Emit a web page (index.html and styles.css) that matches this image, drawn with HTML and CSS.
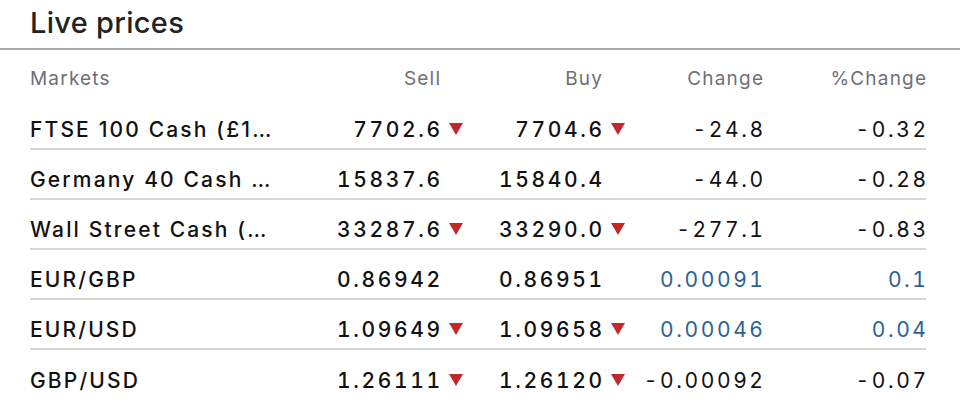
FILE: index.html
```html
<!DOCTYPE html>
<html lang="en">
<head>
<meta charset="utf-8">
<title>Live prices</title>
<link rel="stylesheet" href="styles.css">
</head>
<body>
<section class="panel">
  <h2 class="title">Live prices</h2>
  <div class="table">
    <div class="row head">
      <div class="c-name">Markets</div>
      <div class="c-num">Sell</div>
      <div class="c-arr"></div>
      <div class="c-num">Buy</div>
      <div class="c-arr"></div>
      <div class="c-chg">Change</div>
      <div class="c-pct">%Change</div>
    </div>
    <div class="row">
      <div class="c-name">FTSE 100 Cash (£10)</div>
      <div class="c-num">7702.6</div>
      <div class="c-arr"><span class="down"></span></div>
      <div class="c-num">7704.6</div>
      <div class="c-arr"><span class="down"></span></div>
      <div class="c-chg">-24.8</div>
      <div class="c-pct">-0.32</div>
    </div>
    <div class="row">
      <div class="c-name">Germany 40 Cash (€1)</div>
      <div class="c-num">15837.6</div>
      <div class="c-arr"></div>
      <div class="c-num">15840.4</div>
      <div class="c-arr"></div>
      <div class="c-chg">-44.0</div>
      <div class="c-pct">-0.28</div>
    </div>
    <div class="row">
      <div class="c-name">Wall Street Cash ($1)</div>
      <div class="c-num">33287.6</div>
      <div class="c-arr"><span class="down"></span></div>
      <div class="c-num">33290.0</div>
      <div class="c-arr"><span class="down"></span></div>
      <div class="c-chg">-277.1</div>
      <div class="c-pct">-0.83</div>
    </div>
    <div class="row">
      <div class="c-name">EUR/GBP</div>
      <div class="c-num">0.86942</div>
      <div class="c-arr"></div>
      <div class="c-num">0.86951</div>
      <div class="c-arr"></div>
      <div class="c-chg up">0.00091</div>
      <div class="c-pct up">0.1</div>
    </div>
    <div class="row">
      <div class="c-name">EUR/USD</div>
      <div class="c-num">1.09649</div>
      <div class="c-arr"><span class="down"></span></div>
      <div class="c-num">1.09658</div>
      <div class="c-arr"><span class="down"></span></div>
      <div class="c-chg up">0.00046</div>
      <div class="c-pct up">0.04</div>
    </div>
    <div class="row">
      <div class="c-name">GBP/USD</div>
      <div class="c-num">1.26111</div>
      <div class="c-arr"><span class="down"></span></div>
      <div class="c-num">1.26120</div>
      <div class="c-arr"><span class="down"></span></div>
      <div class="c-chg">-0.00092</div>
      <div class="c-pct">-0.07</div>
    </div>
  </div>
</section>
</body>
</html>
```
FILE: styles.css
```css
html, body {
  margin: 0;
  padding: 0;
  background: #ffffff;
}
body {
  font-family: Inter, "Noto Sans", "Liberation Sans", sans-serif;
  color: #111111;
  overflow: hidden;
}
.panel {
  width: 960px;
}
.title {
  box-sizing: border-box;
  margin: 0;
  padding: 5px 30px 0;
  height: 50px;
  font-size: 29px;
  font-weight: 500;
  line-height: 36px;
  letter-spacing: 0.3px;
  color: #222222;
  border-bottom: 2px solid #ababab;
}
.table {
  padding: 0 34px 0 30px;
}
.row {
  box-sizing: border-box;
  display: grid;
  grid-template-columns: 250px 160px 26px 136px 26px 135px 163px;
  align-items: center;
  height: 50px;
  padding-top: 10px;
  border-bottom: 2px solid #d6d6d6;
  font-size: 21px;
  font-weight: 500;
  font-variant-numeric: tabular-nums;
  letter-spacing: 2.6px;
}
.row.head {
  padding-top: 6px;
  border-bottom: none;
  font-size: 19px;
  font-weight: 400;
  letter-spacing: 1.2px;
  color: #6f6f78;
}
.row:last-child {
  border-bottom: none;
}
.c-name {
  white-space: nowrap;
  overflow: hidden;
  text-overflow: ellipsis;
  padding-right: 4px;
  letter-spacing: 2.15px;
  font-variant-numeric: normal;
}
.row.head .c-name {
  letter-spacing: 1.2px;
}
.c-num, .c-chg, .c-pct {
  text-align: right;
  white-space: nowrap;
  margin-right: -2.6px;
}
.row.head .c-num, .row.head .c-chg, .row.head .c-pct {
  margin-right: -1.2px;
}
.c-chg, .c-pct {
  font-weight: 400;
}
.up {
  color: #2c6392;
}
.c-arr {
  display: flex;
  align-items: center;
  padding-left: 9px;
}
.down {
  width: 0;
  height: 0;
  border-left: 7px solid transparent;
  border-right: 7px solid transparent;
  border-top: 12px solid #c1272d;
}
```
